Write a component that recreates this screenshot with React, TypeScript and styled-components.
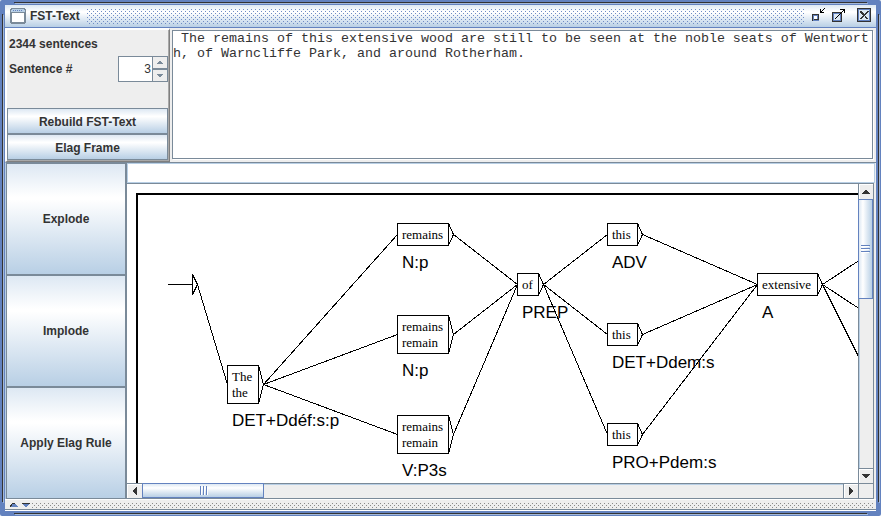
import React from "react";
import styled, { createGlobalStyle, css } from "styled-components";

const c = {
  frame: "#6382bf",
  dark: "#333333",
  steel: "#7a8a99",
  pale: "#b8cfe5",
  panel: "#eeeeee",
};

const glossy = "linear-gradient(180deg, #dde8f3 0%, #ffffff 30%, #ffffff 32%, #b8cfe5 100%)";

const bumps = (color: string) => css`
  background-image: conic-gradient(from 270deg at 1px 1px, ${color} 90deg, transparent 0),
    conic-gradient(from 270deg at 1px 1px, ${color} 90deg, transparent 0);
  background-size: 4px 4px;
  background-position: 0 0, 2px 2px;
`;

const GlobalStyle = createGlobalStyle`
  * { box-sizing: border-box; }
  body { margin: 0; background: #ffffff; }
  button, input, textarea { font: inherit; color: inherit; border-radius: 0; margin: 0; }
`;

const Frame = styled.main`
  position: relative;
  display: flex;
  flex-direction: column;
  height: 100vh;
  padding: 5px;
  border-radius: 2px;
  background: ${c.frame};
  color: ${c.dark};
  font: bold 12px/16px "Liberation Sans", Arial, sans-serif;
`;

const EdgeLine = styled.span<{ $side: "top" | "bottom" | "left" | "right" }>`
  position: absolute;
  pointer-events: none;
  ${({ $side }) =>
    $side === "top" || $side === "bottom"
      ? css`left: 14px; right: 14px; height: 1px;`
      : css`top: 14px; bottom: 14px; width: 1px;`}
  ${({ $side }) => $side}: 2px;
  background: ${c.dark};
  box-shadow: 1px 1px 0 #a3b8d8;
`;

const TitleBar = styled.header`
  display: flex;
  align-items: center;
  flex: none;
  height: 23px;
  padding: 0 4px 0 5px;
  border-bottom: 1px solid ${c.frame};
  background: linear-gradient(180deg, #dde8f3 0%, #ffffff 30%, #ffffff 34%, #b8cfe5 100%);
`;

const Title = styled.h1`
  margin: 0 7px 0 4px;
  font-size: 12px;
  line-height: 16px;
`;

const TitleBumps = styled.div`
  flex: 1;
  height: 15px;
  margin-right: 6px;
  ${bumps("#6f8cc4")}
`;

const WindowButtons = styled.div`
  display: flex;
  gap: 4px;
`;

const IconButton = styled.button<{ $last?: boolean }>`
  display: block;
  width: 16px;
  height: 16px;
  padding: 0;
  border: 0;
  background: none;
  margin-left: ${({ $last }) => ($last ? "5px" : "0")};
`;

const TopPane = styled.section`
  display: flex;
  flex: none;
  background: ${c.panel};
`;

const SentencePanel = styled.div`
  display: flex;
  flex-direction: column;
  width: 165px;
  height: 134px;
  border: 1px solid #7f7f7f;
  border-left: 2px solid #ffffff;
  border-top: 2px solid #ffffff;
  box-shadow: inset -1px -1px 0 #a8a8a8;
  padding: 0 1px 1px 0;
`;

const Count = styled.p`
  margin: 6px 0 0 2px;
`;

const SpinnerRow = styled.div`
  display: flex;
  align-items: center;
  justify-content: space-between;
  margin: 4px 0 auto 2px;
`;

const Spinner = styled.div`
  display: flex;
  height: 26px;
`;

const SpinnerInput = styled.input`
  width: 34px;
  padding: 0 1px 0 0;
  border: 1px solid ${c.steel};
  border-right: 0;
  background: #ffffff;
  font-weight: normal;
  text-align: right;
  outline: 0;
`;

const SpinnerArrows = styled.div`
  display: grid;
  grid-template-rows: 1fr 1fr;
  width: 16px;
`;

const SpinnerArrow = styled.button`
  display: grid;
  place-items: center;
  padding: 0;
  border: 1px solid ${c.steel};
  background: ${c.panel};
`;

const WideButton = styled.button`
  height: 26px;
  padding: 1px 0 0;
  border: 1px solid ${c.steel};
  background: ${glossy};
`;

const SentenceBox = styled.div`
  display: flex;
  flex: 1;
  padding: 2px 3px 3px 2px;
`;

const SentenceText = styled.textarea`
  flex: 1;
  min-width: 0;
  resize: none;
  padding: 0;
  border: 1px solid ${c.steel};
  box-shadow: 1px 1px 0 #ffffff;
  background: #ffffff;
  font: 10pt/15px "Liberation Mono", "Courier New", monospace;
  white-space: pre-wrap;
  word-break: break-all;
  overflow: hidden;
  outline: 0;
`;

const BottomPane = styled.section`
  display: flex;
  flex: 1;
  min-height: 0;
  padding: 0 1px 0 0;
  border-top: 1px solid ${c.steel};
  border-left: 1px solid ${c.pale};
  background: ${c.panel};
`;

const SideButtons = styled.nav`
  display: grid;
  grid-auto-rows: 1fr;
  flex: none;
  width: 121px;
  border-right: 1px solid ${c.steel};
`;

const SideButton = styled.button`
  padding: 0;
  border: 1px solid ${c.steel};
  background: ${glossy};
`;

const GraphPanel = styled.div`
  display: flex;
  flex-direction: column;
  flex: 1;
  min-width: 0;
`;

const FormulaInput = styled.input`
  flex: none;
  width: 100%;
  height: 20px;
  padding: 0 2px;
  border: 1px solid ${c.pale};
  background: #ffffff;
  outline: 0;
`;

const ScrollPane = styled.div`
  display: grid;
  flex: 1;
  min-height: 0;
  grid-template-columns: minmax(0, 1fr) 16px;
  grid-template-rows: minmax(0, 1fr) 16px;
  margin-right: 1px;
  border-top: 1px solid ${c.steel};
`;

const Viewport = styled.div`
  overflow: hidden;
  background: #ffffff;
`;

const Graph = styled.svg`
  display: block;
  text {
    fill: #000000;
    white-space: pre;
  }
`;

const ScrollBar = styled.div<{ $vertical?: boolean }>`
  display: flex;
  flex-direction: ${({ $vertical }) => ($vertical ? "column" : "row")};
  border: 1px solid ${c.steel};
  border-width: ${({ $vertical }) => ($vertical ? "0 1px 0 1px" : "1px 0 1px 0")};
  background: ${c.panel};
  box-shadow: inset ${({ $vertical }) => ($vertical ? "1px 0" : "0 1px")} 0 ${c.pale};
`;

const ScrollArrow = styled.button`
  display: grid;
  place-items: center;
  flex: none;
  width: 15px;
  height: 15px;
  padding: 0;
  border: 0;
  background: ${c.panel};
  box-shadow: inset 1px 1px 0 #ffffff;
`;

const VerticalArrow = styled(ScrollArrow)<{ $end?: boolean }>`
  width: 14px;
  border-top: ${({ $end }) => ($end ? `1px solid ${c.steel}` : "0")};
`;

const HorizontalArrow = styled(ScrollArrow)<{ $end?: boolean }>`
  height: 14px;
  border-left: ${({ $end }) => ($end ? `1px solid ${c.steel}` : "0")};
`;

const Track = styled.div<{ $vertical?: boolean }>`
  display: flex;
  flex: 1;
  min-width: 0;
  min-height: 0;
  flex-direction: ${({ $vertical }) => ($vertical ? "column" : "row")};
`;

const Thumb = styled.div<{ $vertical?: boolean }>`
  display: grid;
  place-items: center;
  border: 1px solid ${c.frame};
  ${({ $vertical }) =>
    $vertical
      ? css`
          height: 37%;
          margin: 0 0 0 -1px;
          background: linear-gradient(90deg, #dde8f3 0%, #ffffff 30%, #b8cfe5 100%);
        `
      : css`
          width: 122px;
          margin: -1px 0 0;
          background: linear-gradient(180deg, #dde8f3 0%, #ffffff 30%, #b8cfe5 100%);
        `}
`;

const Corner = styled.div`
  border: 1px solid ${c.steel};
  background: ${c.panel};
`;

const Divider = styled.footer`
  display: flex;
  align-items: flex-start;
  flex: none;
  height: 12px;
  padding: 2px 3px 0 3px;
  border-top: 1px solid #ffffff;
  border-bottom: 1px solid #ffffff;
  background: ${c.panel};
  box-shadow: inset 0 -1px 0 ${c.steel};
`;

const DividerButton = styled.button`
  display: block;
  width: 12px;
  height: 5px;
  padding: 0 2px;
  border: 0;
  background: none;
`;

const DividerBumps = styled.div`
  flex: 1;
  height: 5px;
  margin-top: 1px;
  ${bumps("#8a8a8a")}
`;

function Arrow({
  dir,
  size = 8,
  color = c.dark,
  edge,
}: {
  dir: "up" | "down" | "left" | "right";
  size?: number;
  color?: string;
  edge?: string;
}) {
  const half = size / 2;
  const shapes = {
    up: `M${half - 1} 0h2L${size} ${half}H0z`,
    down: `M0 0h${size}L${half + 1} ${half}h-2z`,
    left: `M0 ${half - 1}v2L${half} ${size}V0z`,
    right: `M0 0v${size}L${half} ${half + 1}v-2z`,
  };
  const flat = dir === "up" || dir === "down";
  return (
    <svg
      width={flat ? size : half}
      height={flat ? half : size}
      display="block"
      aria-hidden="true"
      shapeRendering="crispEdges"
    >
      <path d={shapes[dir]} fill={color} />
      {edge && dir === "up" && <path d={`M0 ${half}L${half - 1} 0h2`} fill="none" stroke={edge} />}
      {edge && dir === "down" && <path d={`M0 0h${size}v1H0z`} fill={edge} />}
    </svg>
  );
}

function Grip({ vertical = false }: { vertical?: boolean }) {
  return (
    <svg width="9" height="9" aria-hidden="true" shapeRendering="crispEdges">
      <path d={vertical ? "M0 2.5h8M0 5.5h8M0 8.5h8" : "M2.5 1v8M5.5 1v8M8.5 1v8"} stroke="#ffffff" />
      <path d={vertical ? "M0 1.5h9M0 4.5h9M0 7.5h9" : "M1.5 0v9M4.5 0v9M7.5 0v9"} stroke={c.frame} />
    </svg>
  );
}

type GraphNode = { id: string; x: number; y: number; w: number; words: string[]; tag: string };

const nodes: GraphNode[] = [
  { id: "the", x: 227, y: 365, w: 31, words: ["The", "the"], tag: "DET+Ddéf:s:p" },
  { id: "noun", x: 397, y: 223, w: 51, words: ["remains"], tag: "N:p" },
  { id: "noun2", x: 397, y: 315, w: 51, words: ["remains", "remain"], tag: "N:p" },
  { id: "verb", x: 397, y: 415, w: 51, words: ["remains", "remain"], tag: "V:P3s" },
  { id: "of", x: 517, y: 273, w: 21, words: ["of"], tag: "PREP" },
  { id: "adv", x: 607, y: 223, w: 30, words: ["this"], tag: "ADV" },
  { id: "det", x: 607, y: 323, w: 30, words: ["this"], tag: "DET+Ddem:s" },
  { id: "pro", x: 607, y: 423, w: 30, words: ["this"], tag: "PRO+Pdem:s" },
  { id: "ext", x: 757, y: 273, w: 60, words: ["extensive"], tag: "A" },
];

const links: [string, string][] = [
  ["the", "noun"], ["the", "noun2"], ["the", "verb"],
  ["noun", "of"], ["noun2", "of"], ["verb", "of"],
  ["of", "adv"], ["of", "det"], ["of", "pro"],
  ["adv", "ext"], ["det", "ext"], ["pro", "ext"],
];

const boxHeight = (n: GraphNode) => (n.words.length === 1 ? 22 : 38);
const middle = (n: GraphNode) => n.y + boxHeight(n) / 2;
const find = (id: string) => nodes.find((n) => n.id === id)!;

function SentenceGraph() {
  return (
    <Graph width="1600" height="900" viewBox="127 184 1600 900" role="img" aria-label="Sentence automaton">
      <path d="M1700 194H137V1000" fill="none" stroke="#000000" strokeWidth="2" />
      <g transform="translate(0.5 0.5)" fill="none" stroke="#000000" shapeRendering="crispEdges">
        <path d="M167 284H192M192 274V294L197 284z" />
        <path d="M197 284L227 384" />
        {links.map(([from, to]) => {
          const a = find(from);
          const b = find(to);
          return <path key={from + to} d={`M${a.x + a.w + 5} ${middle(a)}L${b.x} ${middle(b)}`} />;
        })}
        <path d="M822 284L892 238M822 284L892 330M822 284L892 424" />
        {nodes.map((n) => {
          const h = boxHeight(n);
          return <path key={n.id} d={`M${n.x} ${n.y}h${n.w}v${h}h${-n.w}zM${n.x + n.w} ${n.y}l5 ${h / 2}l-5 ${h / 2}`} />;
        })}
      </g>
      {nodes.map((n) => (
        <g key={n.id}>
          <g fontFamily="'Liberation Serif', 'Times New Roman', serif" fontSize="13" fontWeight="400">
            {n.words.map((word, i) => (
              <text key={word} x={n.x + 5} y={n.y + 16 + i * 16}>{word}</text>
            ))}
          </g>
          <text x={n.x + 5} y={n.y + boxHeight(n) + 23} fontFamily="'Liberation Sans', Arial, sans-serif" fontSize="17" fontWeight="400">
            {n.tag}
          </text>
        </g>
      ))}
    </Graph>
  );
}

function WindowIcon() {
  return (
    <svg width="16" height="16" aria-hidden="true" shapeRendering="crispEdges">
      <path d="M1 0h14v1h1v14h-1v1H1v-1H0V1h1z" fill={c.steel} />
      <path d="M2 1h12v1h1v2H1V2h1z" fill={c.pale} />
      <path d="M2 5h12v9H2z" fill="#ffffff" />
      <path d="M3 2.500h10" stroke={c.frame} strokeDasharray="1 1" />
    </svg>
  );
}

function MinimizeIcon() {
  return (
    <svg width="16" height="16" display="block" aria-hidden="true" shapeRendering="crispEdges">
      <path d="M1.500 6.500h6v6h-6z" fill="#ffffff" stroke={c.frame} />
      <path d="M1.500 12.500v-6h6" fill="none" stroke={c.dark} />
      <path d="M2.500 7.500h4v4h-4z" fill="#ffffff" stroke={c.frame} />
      <path d="M3 11.500h4.500V7" fill="none" stroke={c.dark} />
      <path d="M9 1h1v3h3v1H9zM10 3h1v1h-1zM11 2h1v1h-1zM12 1h1v1h-1zM13 0h1v1h-1z" fill="#000000" />
    </svg>
  );
}

function MaximizeIcon() {
  return (
    <svg width="16" height="16" display="block" aria-hidden="true" shapeRendering="crispEdges">
      <path d="M1.500 4.500h9v9h-9z" fill="#ffffff" stroke={c.dark} />
      <path d="M2.500 5.500h7v7h-7z" fill="#dde8f3" stroke={c.frame} />
      <path d="M4 10h1v1H4zM5 9h1v1H5zM6 8h1v1H6zM7 7h1v1H7zM8 6h1v1H8zM9 5h1v1H9zM10 4h1v1h-1zM11 3h1v1h-1zM12 2h1v1h-1zM9 1h5v4h-1V2H9z" fill="#000000" />
    </svg>
  );
}

function CloseIcon() {
  return (
    <svg width="16" height="16" display="block" aria-hidden="true" shapeRendering="crispEdges">
      <path d="M1.500 0.500h13v13h-13z" fill="#dde8f3" stroke={c.dark} />
      <path d="M2.500 1.500h11v11h-11z" fill="none" stroke={c.frame} />
      <path d="M4 3h2v1h1v1h1v1h1V5h1V4h1V3h2v1h-1v1h-1v1h-1v1h-1v1h1v1h1v1h1v1h-2v-1h-1V9H9V8H8v1H7v1H6v1H4v-1h1V9h1V8h1V7H6V6H5V5H4z" fill={c.dark} />
    </svg>
  );
}

export default function App() {
  return (
    <>
      <GlobalStyle />
      <Frame>
        <EdgeLine $side="top" />
        <EdgeLine $side="bottom" />
        <EdgeLine $side="left" />
        <EdgeLine $side="right" />
        <TitleBar>
          <WindowIcon />
          <Title>FST-Text</Title>
          <TitleBumps />
          <WindowButtons>
            <IconButton aria-label="Minimize"><MinimizeIcon /></IconButton>
            <IconButton aria-label="Maximize"><MaximizeIcon /></IconButton>
            <IconButton aria-label="Close" $last><CloseIcon /></IconButton>
          </WindowButtons>
        </TitleBar>

        <TopPane>
          <SentencePanel>
            <Count>2344 sentences</Count>
            <SpinnerRow>
              <label htmlFor="sentence-number">Sentence #</label>
              <Spinner>
                <SpinnerInput id="sentence-number" defaultValue="3" />
                <SpinnerArrows>
                  <SpinnerArrow aria-label="Next sentence"><Arrow dir="up" size={6} color={c.steel} /></SpinnerArrow>
                  <SpinnerArrow aria-label="Previous sentence"><Arrow dir="down" size={6} color={c.steel} /></SpinnerArrow>
                </SpinnerArrows>
              </Spinner>
            </SpinnerRow>
            <WideButton>Rebuild FST-Text</WideButton>
            <WideButton>Elag Frame</WideButton>
          </SentencePanel>
          <SentenceBox>
            <SentenceText
              aria-label="Sentence"
              spellCheck={false}
              defaultValue=" The remains of this extensive wood are still to be seen at the noble seats of Wentworth, of Warncliffe Park, and around Rotherham."
            />
          </SentenceBox>
        </TopPane>

        <BottomPane>
          <SideButtons>
            <SideButton>Explode</SideButton>
            <SideButton>Implode</SideButton>
            <SideButton>Apply Elag Rule</SideButton>
          </SideButtons>
          <GraphPanel>
            <FormulaInput aria-label="Box content" />
            <ScrollPane>
              <Viewport><SentenceGraph /></Viewport>
              <ScrollBar $vertical>
                <VerticalArrow aria-label="Scroll up"><Arrow dir="up" /></VerticalArrow>
                <Track $vertical>
                  <Thumb $vertical><Grip vertical /></Thumb>
                </Track>
                <VerticalArrow aria-label="Scroll down" $end><Arrow dir="down" /></VerticalArrow>
              </ScrollBar>
              <ScrollBar>
                <HorizontalArrow aria-label="Scroll left"><Arrow dir="left" /></HorizontalArrow>
                <Track>
                  <Thumb><Grip /></Thumb>
                </Track>
                <HorizontalArrow aria-label="Scroll right" $end><Arrow dir="right" /></HorizontalArrow>
              </ScrollBar>
              <Corner />
            </ScrollPane>
          </GraphPanel>
        </BottomPane>

        <Divider>
          <DividerButton aria-label="Collapse up"><Arrow dir="up" color={c.frame} edge={c.dark} /></DividerButton>
          <DividerButton aria-label="Collapse down"><Arrow dir="down" color={c.frame} edge={c.dark} /></DividerButton>
          <DividerBumps />
        </Divider>
      </Frame>
    </>
  );
}
